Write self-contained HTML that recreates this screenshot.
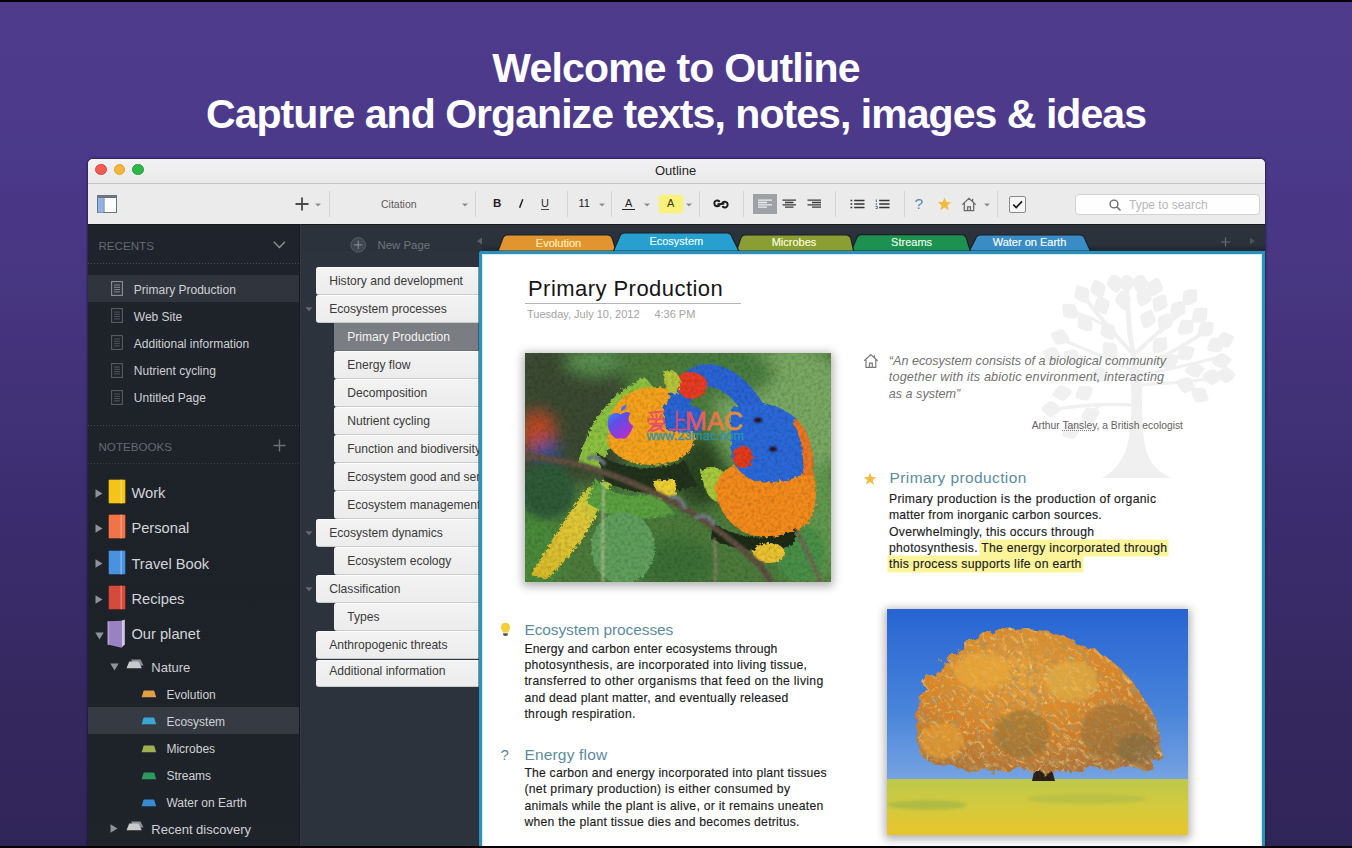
<!DOCTYPE html>
<html><head><meta charset="utf-8">
<style>
*{margin:0;padding:0;box-sizing:border-box}
html,body{width:1352px;height:848px;overflow:hidden}
body{position:relative;font-family:"Liberation Sans",sans-serif;background:linear-gradient(180deg,#4f3b8b 0%,#4d3a8b 10%,#4b398a 17.7%,#46357f 35.4%,#3c2d70 59%,#35285f 82.5%,#302558 100%)}
.a{position:absolute}
.t{position:absolute;white-space:nowrap;line-height:1}
#hd1,#hd2{color:#fff;font-weight:bold;left:0;width:1352px;text-align:center}
.blk{position:absolute;left:0;width:1352px;background:#050308}
</style></head><body>
<div class="blk" style="top:0;height:2px"></div>

<div id="hd1" class="t" style="top:48px;font-size:41px;letter-spacing:-0.8px">Welcome to Outline</div>
<div id="hd2" class="t" style="top:94px;font-size:41px;letter-spacing:-0.95px">Capture and Organize texts, notes, images &amp; ideas</div>

<!-- window -->
<div class="a" style="left:88px;top:159px;width:1177px;height:687px;border-radius:5px 5px 0 0;overflow:hidden;background:#ececec;box-shadow:0 0 2px 1px rgba(10,5,30,0.45)"></div>
<div class="a" style="left:88px;top:159px;width:1177px;height:24px;border-radius:5px 5px 0 0;background:linear-gradient(#f2f1f3,#eaeaea)"></div>
<div class="a" style="left:88px;top:183px;width:1177px;height:1px;background:#c4c4c4"></div>
<div class="a" style="left:88px;top:184px;width:1177px;height:40px;background:#ebebeb"></div>
<div class="a" style="left:95px;top:163.5px;width:11.5px;height:11.5px;border-radius:50%;background:#f25c54;border:0.5px solid #dd4a44"></div>
<div class="a" style="left:113.5px;top:163.5px;width:11.5px;height:11.5px;border-radius:50%;background:#f6b63a;border:0.5px solid #dfa030"></div>
<div class="a" style="left:132px;top:163.5px;width:11.5px;height:11.5px;border-radius:50%;background:#2fb84a;border:0.5px solid #22a03a"></div>
<div id="ttl" class="t" style="left:655px;top:164px;font-size:13px;color:#262626">Outline</div>
<div class="a" style="left:88px;top:223.5px;width:1177px;height:1px;background:#b8b8b8"></div>
<!-- toolbar -->
<svg class="a" style="left:97px;top:195px" width="20" height="18"><rect x="0.5" y="0.5" width="19" height="17" fill="#fdfdfd" stroke="#6c7480"/><rect x="0.5" y="0.5" width="19" height="2.5" fill="#6c7480"/><rect x="1" y="3" width="5.5" height="14.5" fill="#8fb2ea"/><rect x="6.5" y="3" width="1" height="14.5" fill="#6c7480"/></svg>
<svg class="a" style="left:295px;top:197px" width="14" height="14"><path d="M7 0.5V13.5M0.5 7H13.5" stroke="#4a4a4a" stroke-width="1.8"/></svg>
<div class="a" style="left:329px;top:191px;width:1px;height:26px;background:#d2d2d2"></div><div class="a" style="left:475px;top:191px;width:1px;height:26px;background:#d2d2d2"></div><div class="a" style="left:567px;top:191px;width:1px;height:26px;background:#d2d2d2"></div><div class="a" style="left:611px;top:191px;width:1px;height:26px;background:#d2d2d2"></div><div class="a" style="left:699px;top:191px;width:1px;height:26px;background:#d2d2d2"></div><div class="a" style="left:743px;top:191px;width:1px;height:26px;background:#d2d2d2"></div><div class="a" style="left:835px;top:191px;width:1px;height:26px;background:#d2d2d2"></div><div class="a" style="left:904px;top:191px;width:1px;height:26px;background:#d2d2d2"></div><div class="a" style="left:997px;top:191px;width:1px;height:26px;background:#d2d2d2"></div><svg class="a" style="left:315px;top:203px" width="6" height="4"><path d="M0 0.5H6L3 3.5Z" fill="#8c8c8c"/></svg><svg class="a" style="left:461.5px;top:203px" width="6" height="4"><path d="M0 0.5H6L3 3.5Z" fill="#8c8c8c"/></svg><svg class="a" style="left:599px;top:203px" width="6" height="4"><path d="M0 0.5H6L3 3.5Z" fill="#8c8c8c"/></svg><svg class="a" style="left:644px;top:203px" width="6" height="4"><path d="M0 0.5H6L3 3.5Z" fill="#8c8c8c"/></svg><svg class="a" style="left:686px;top:203px" width="6" height="4"><path d="M0 0.5H6L3 3.5Z" fill="#8c8c8c"/></svg><svg class="a" style="left:984px;top:203px" width="6" height="4"><path d="M0 0.5H6L3 3.5Z" fill="#8c8c8c"/></svg>
<div id="cit" class="t" style="left:381px;top:198.5px;font-size:10.5px;color:#5c5c5c">Citation</div>
<div class="t" style="left:493px;top:198px;font-size:11.5px;font-weight:bold;color:#1e1e1e">B</div>
<svg class="a" style="left:518px;top:199px" width="6" height="9"><path d="M4.8 0.3L1.6 8.7" stroke="#222" stroke-width="1.5"/></svg>
<div class="t" style="left:541px;top:198px;font-size:11px;color:#2a2a2a">U</div>
<div class="a" style="left:541px;top:209px;width:8px;height:1px;background:#444"></div>
<div id="n11" class="t" style="left:578.5px;top:198px;font-size:11px;color:#222">11</div>
<div class="t" style="left:625px;top:198px;font-size:11px;color:#222">A</div>
<div class="a" style="left:622px;top:208.7px;width:13px;height:1.8px;background:#222"></div>
<div class="a" style="left:659px;top:195px;width:23.5px;height:17.5px;border-radius:4px;background:#f8f27a;box-shadow:0 0 2px #f8f27a"></div>
<div class="t" style="left:667px;top:198px;font-size:11px;color:#3a3a14">A</div>
<svg class="a" style="left:713px;top:199px" width="16" height="10"><path d="M6.2 2.2C4.6 0.8 1.4 1.4 1.3 4.2C1.2 7.3 4.6 8 6.4 6.4M9.6 3.5C11.4 1.9 14.7 2.6 14.7 5.6C14.7 8.6 11.4 9.2 9.8 7.8M5.3 5.3L10.5 4.7" stroke="#1c1c1c" stroke-width="2" fill="none" stroke-linecap="round"/></svg>
<div class="a" style="left:753px;top:194px;width:24px;height:20px;background:#9ea2a7"></div>
<svg class="a" style="left:758px;top:199px" width="15" height="11"><path d="M0 1.2H14M0 3.5H9M0 5.8H14M0 8.1H9" stroke="#eef0f2" stroke-width="1.3"/></svg>
<svg class="a" style="left:782px;top:199px" width="15" height="11"><path d="M0.5 1.2H14M3 3.5H11.5M0.5 5.8H14M3 8.1H11.5" stroke="#3a3a3a" stroke-width="1.3"/></svg>
<svg class="a" style="left:807px;top:199px" width="15" height="11"><path d="M0.5 1.2H14M5 3.5H14M0.5 5.8H14M5 8.1H14" stroke="#3a3a3a" stroke-width="1.3"/></svg>
<svg class="a" style="left:850px;top:199px" width="16" height="10"><path d="M0.5 1.5H2.3M0.5 5H2.3M0.5 8.5H2.3" stroke="#333" stroke-width="1.6"/><path d="M4.2 1.5H14.5M4.2 5H14.5M4.2 8.5H14.5" stroke="#333" stroke-width="1.3"/></svg>
<svg class="a" style="left:875px;top:199px" width="16" height="10"><path d="M1.3 0.5V3M1.3 4V6.2M0.6 7.4H2.3V9.5H0.6" stroke="#4a6fa0" stroke-width="1" fill="none"/><path d="M4.2 1.5H14.5M4.2 5H14.5M4.2 8.5H14.5" stroke="#333" stroke-width="1.4"/></svg>
<div class="t" style="left:914.5px;top:196px;font-size:15.5px;color:#5a88b8">?</div>
<svg class="a" style="left:937px;top:197px" width="15" height="14"><path d="M7.5 0.6L9.3 5.1L14.2 5.3L10.4 8.4L11.7 13.2L7.5 10.5L3.3 13.2L4.6 8.4L0.8 5.3L5.7 5.1Z" fill="#f1bb3c"/></svg>
<svg class="a" style="left:961px;top:197px" width="16" height="15"><path d="M1.3 7.6L8 1.3L14.7 7.6M3.3 6V13.6H12.7V6M6.6 13.6V9.8H9.4V13.6M11.6 1.8V4.2" stroke="#6a6a6a" stroke-width="1.3" fill="none"/></svg>
<div class="a" style="left:1009px;top:196px;width:17px;height:16.5px;border:1px solid #8a8a8a;border-radius:2px;background:#f6f6f6"></div>
<svg class="a" style="left:1011px;top:199px" width="13" height="11"><path d="M2.3 5.6L5.2 8.5L11 2.4" stroke="#1a1a1a" stroke-width="1.7" fill="none"/></svg>
<div class="a" style="left:1075px;top:194px;width:185px;height:20.5px;border:1px solid #d2d2d2;border-radius:4px;background:#fefefe"></div>
<svg class="a" style="left:1109px;top:198.5px" width="13" height="13"><circle cx="5" cy="5" r="3.9" stroke="#6a6a6a" stroke-width="1.4" fill="none"/><path d="M7.8 7.8L11.5 11.5" stroke="#6a6a6a" stroke-width="1.6"/></svg>
<div id="srch" class="t" style="left:1129px;top:199px;font-size:12px;color:#b8b8b8">Type to search</div>

<!-- sidebar -->
<div class="a" style="left:88px;top:224px;width:211px;height:622px;background:linear-gradient(180deg,#1f232b,#1d2128 60%,#1f232a)"></div>
<div class="a" style="left:299px;top:224px;width:1px;height:622px;background:#16191e"></div>
<div class="a" style="left:88px;top:263px;width:211px;height:1px;background:repeating-linear-gradient(90deg,#4a4f57 0 1px,transparent 1px 3px)"></div>
<div class="a" style="left:88px;top:425px;width:211px;height:1px;background:repeating-linear-gradient(90deg,#4a4f57 0 1px,transparent 1px 3px)"></div>
<div class="a" style="left:88px;top:463px;width:211px;height:1px;background:repeating-linear-gradient(90deg,#3a3f47 0 1px,transparent 1px 3px)"></div>
<div class="a" style="left:88px;top:275px;width:211px;height:27px;background:#30353d"></div>
<div class="a" style="left:88px;top:707px;width:211px;height:27px;background:#363b43"></div>
<svg class="a" style="left:273px;top:241px" width="13" height="8"><path d="M0.8 0.8L6.4 6.5L12 0.8" stroke="#8c9198" stroke-width="1.4" fill="none"/></svg>
<svg class="a" style="left:273px;top:438.5px" width="13" height="13"><path d="M6.5 0.5V12.5M0.5 6.5H12.5" stroke="#6c7178" stroke-width="1.3"/></svg>
<div id="rec" class="t" style="left:98.5px;top:239.98px;font-size:11.6px;color:#646a73;">RECENTS</div>
<div id="nbk" class="t" style="left:98.5px;top:440.68px;font-size:11.6px;color:#646a73;">NOTEBOOKS</div>
<svg class="a" style="left:110.5px;top:281.3px" width="12" height="15"><rect x="0.6" y="0.6" width="10.8" height="13.8" fill="none" stroke="#8e9298" stroke-width="1.1"/><path d="M3 4H9M3 6.3H9M3 8.6H9M3 10.9H9" stroke="#8e9298" stroke-width="0.9"/></svg>
<div id="ri0" class="t" style="left:133.8px;top:283.64px;font-size:12px;color:#cfd1d4;">Primary Production</div>
<svg class="a" style="left:110.5px;top:308.4px" width="12" height="15"><rect x="0.6" y="0.6" width="10.8" height="13.8" fill="none" stroke="#5a5e65" stroke-width="1.1"/><path d="M3 4H9M3 6.3H9M3 8.6H9M3 10.9H9" stroke="#575b62" stroke-width="0.9"/></svg>
<div id="ri1" class="t" style="left:133.8px;top:310.69px;font-size:12px;color:#cfd1d4;">Web Site</div>
<svg class="a" style="left:110.5px;top:335.4px" width="12" height="15"><rect x="0.6" y="0.6" width="10.8" height="13.8" fill="none" stroke="#575b62" stroke-width="1.1"/><path d="M3 4H9M3 6.3H9M3 8.6H9M3 10.9H9" stroke="#575b62" stroke-width="0.9"/></svg>
<div id="ri2" class="t" style="left:133.8px;top:337.74px;font-size:12px;color:#cfd1d4;">Additional information</div>
<svg class="a" style="left:110.5px;top:362.5px" width="12" height="15"><rect x="0.6" y="0.6" width="10.8" height="13.8" fill="none" stroke="#575b62" stroke-width="1.1"/><path d="M3 4H9M3 6.3H9M3 8.6H9M3 10.9H9" stroke="#575b62" stroke-width="0.9"/></svg>
<div id="ri3" class="t" style="left:133.8px;top:364.79px;font-size:12px;color:#cfd1d4;">Nutrient cycling</div>
<svg class="a" style="left:110.5px;top:389.5px" width="12" height="15"><rect x="0.6" y="0.6" width="10.8" height="13.8" fill="none" stroke="#575b62" stroke-width="1.1"/><path d="M3 4H9M3 6.3H9M3 8.6H9M3 10.9H9" stroke="#575b62" stroke-width="0.9"/></svg>
<div id="ri4" class="t" style="left:133.8px;top:391.84px;font-size:12px;color:#cfd1d4;">Untitled Page</div>
<svg class="a" style="left:95px;top:488.5px" width="8" height="9"><path d="M0.5 0.3L7.5 4.5L0.5 8.7Z" fill="#8f9399"/></svg>
<svg class="a" style="left:107.5px;top:478.8px" width="18" height="25"><rect x="0.5" y="0.5" width="17" height="24" rx="1" fill="#f4c41c"/><rect x="12.5" y="0.5" width="1.3" height="24" fill="#f9dc5c"/><rect x="0.5" y="0.5" width="17" height="24" rx="1" fill="none" stroke="rgba(0,0,0,0.25)" stroke-width="1"/></svg>
<div id="nb0" class="t" style="left:131.4px;top:485.86px;font-size:14.7px;color:#d3d5d8;">Work</div>
<svg class="a" style="left:95px;top:523.9px" width="8" height="9"><path d="M0.5 0.3L7.5 4.5L0.5 8.7Z" fill="#8f9399"/></svg>
<svg class="a" style="left:107.5px;top:514.2px" width="18" height="25"><rect x="0.5" y="0.5" width="17" height="24" rx="1" fill="#f07448"/><rect x="12.5" y="0.5" width="1.3" height="24" fill="#f6a080"/><rect x="0.5" y="0.5" width="17" height="24" rx="1" fill="none" stroke="rgba(0,0,0,0.25)" stroke-width="1"/></svg>
<div id="nb1" class="t" style="left:131.4px;top:521.26px;font-size:14.7px;color:#d3d5d8;">Personal</div>
<svg class="a" style="left:95px;top:559.3px" width="8" height="9"><path d="M0.5 0.3L7.5 4.5L0.5 8.7Z" fill="#8f9399"/></svg>
<svg class="a" style="left:107.5px;top:549.6px" width="18" height="25"><rect x="0.5" y="0.5" width="17" height="24" rx="1" fill="#4a92e0"/><rect x="12.5" y="0.5" width="1.3" height="24" fill="#8ab8ee"/><rect x="0.5" y="0.5" width="17" height="24" rx="1" fill="none" stroke="rgba(0,0,0,0.25)" stroke-width="1"/></svg>
<div id="nb2" class="t" style="left:131.4px;top:556.66px;font-size:14.7px;color:#d3d5d8;">Travel Book</div>
<svg class="a" style="left:95px;top:594.7px" width="8" height="9"><path d="M0.5 0.3L7.5 4.5L0.5 8.7Z" fill="#8f9399"/></svg>
<svg class="a" style="left:107.5px;top:585.0px" width="18" height="25"><rect x="0.5" y="0.5" width="17" height="24" rx="1" fill="#d44a3c"/><rect x="12.5" y="0.5" width="1.3" height="24" fill="#e88478"/><rect x="0.5" y="0.5" width="17" height="24" rx="1" fill="none" stroke="rgba(0,0,0,0.25)" stroke-width="1"/></svg>
<div id="nb3" class="t" style="left:131.4px;top:592.06px;font-size:14.7px;color:#d3d5d8;">Recipes</div>
<svg class="a" style="left:94.5px;top:631.8px" width="9" height="8"><path d="M0.3 0.5H8.7L4.5 7.5Z" fill="#8f9399"/></svg>
<svg class="a" style="left:106px;top:619.3px" width="22" height="30"><path d="M1.7 2.2L15.5 1.8V28.7L1.7 25.5Z" fill="#9a82c2"/><path d="M1.7 2.2H3.2V25.8H1.7Z" fill="#b4a0d8"/><path d="M15.5 1.8L18.8 0.6V25.2L15.5 28.7Z" fill="#d2c6ea"/></svg>
<div id="nb4" class="t" style="left:131.4px;top:627.36px;font-size:14.7px;color:#d3d5d8;">Our planet</div>
<svg class="a" style="left:109.5px;top:663.0px" width="9" height="8"><path d="M0.3 0.5H8.7L4.5 7.5Z" fill="#8f9399"/></svg>
<svg class="a" style="left:126px;top:659.0px" width="18" height="10"><path d="M5 0.5H14.5L17.5 6.5H8Z" fill="#8a8e94"/><path d="M3.2 2.6H12.6L15.8 9.2H0.5Z" fill="#c8cacc"/></svg>
<div id="nat" class="t" style="left:151.3px;top:660.80px;font-size:13px;color:#cfd1d4;">Nature</div>
<svg class="a" style="left:141px;top:689.4px" width="16" height="9"><path d="M3.4 1.5H12.4Q13 1.5 13.3 2.2L15.2 8.2H0.6L2.5 2.2Q2.8 1.5 3.4 1.5Z" fill="#e0a048"/></svg>
<div id="kd0" class="t" style="left:166.4px;top:688.54px;font-size:12px;color:#cfd1d4;">Evolution</div>
<svg class="a" style="left:141px;top:716.4px" width="16" height="9"><path d="M3.4 1.5H12.4Q13 1.5 13.3 2.2L15.2 8.2H0.6L2.5 2.2Q2.8 1.5 3.4 1.5Z" fill="#3aa6d6"/></svg>
<div id="kd1" class="t" style="left:166.4px;top:715.59px;font-size:12px;color:#cfd1d4;">Ecosystem</div>
<svg class="a" style="left:141px;top:743.5px" width="16" height="9"><path d="M3.4 1.5H12.4Q13 1.5 13.3 2.2L15.2 8.2H0.6L2.5 2.2Q2.8 1.5 3.4 1.5Z" fill="#9fae50"/></svg>
<div id="kd2" class="t" style="left:166.4px;top:742.64px;font-size:12px;color:#cfd1d4;">Microbes</div>
<svg class="a" style="left:141px;top:770.5px" width="16" height="9"><path d="M3.4 1.5H12.4Q13 1.5 13.3 2.2L15.2 8.2H0.6L2.5 2.2Q2.8 1.5 3.4 1.5Z" fill="#2e9a62"/></svg>
<div id="kd3" class="t" style="left:166.4px;top:769.69px;font-size:12px;color:#cfd1d4;">Streams</div>
<svg class="a" style="left:141px;top:797.6px" width="16" height="9"><path d="M3.4 1.5H12.4Q13 1.5 13.3 2.2L15.2 8.2H0.6L2.5 2.2Q2.8 1.5 3.4 1.5Z" fill="#3a8cd0"/></svg>
<div id="kd4" class="t" style="left:166.4px;top:796.74px;font-size:12px;color:#cfd1d4;">Water on Earth</div>
<svg class="a" style="left:110px;top:824.4px" width="8" height="9"><path d="M0.5 0.3L7.5 4.5L0.5 8.7Z" fill="#8f9399"/></svg>
<svg class="a" style="left:126px;top:821.4px" width="18" height="10"><path d="M5 0.5H14.5L17.5 6.5H8Z" fill="#8a8e94"/><path d="M3.2 2.6H12.6L15.8 9.2H0.5Z" fill="#c8cacc"/></svg>
<div id="rdc" class="t" style="left:151.3px;top:823.20px;font-size:13px;color:#cfd1d4;">Recent discovery</div>

<!-- pages column -->
<div class="a" style="left:300px;top:224px;width:965px;height:27px;background:#2c323b"></div>
<div class="a" style="left:88px;top:224px;width:1177px;height:1px;background:#15181d"></div>
<div class="a" style="left:300px;top:224px;width:1px;height:622px;background:#353b44"></div>
<div class="a" style="left:301px;top:251px;width:180px;height:595px;background:#2d333d"></div>
<svg class="a" style="left:350px;top:237px" width="17" height="17"><circle cx="8.2" cy="7.9" r="7.3" fill="#3f454e" stroke="#585e67" stroke-width="1"/><path d="M8.2 3.6V12.2M3.9 7.9H12.5" stroke="#8d939b" stroke-width="1"/></svg>
<div id="np" class="t" style="left:377.5px;top:240.35px;font-size:11.4px;color:#6e757d;">New Page</div>
<div class="a" style="left:316px;top:267px;width:165px;height:28px;background:linear-gradient(#f3f3f3,#ececec);border-radius:3px 0 0 3px;border-bottom:1px solid #c9cacc;overflow:hidden;box-shadow:inset 0 1px 0 rgba(255,255,255,0.8)"></div>
<div class="a" style="left:316px;top:267px;width:163px;height:28px;overflow:hidden"><div id="pc0" class="t" style="left:13.2px;top:7.56px;font-size:12.1px;color:#3a3a3a;">History and development</div>
</div>
<div class="a" style="left:316px;top:295px;width:165px;height:28px;background:linear-gradient(#f3f3f3,#ececec);border-radius:3px 0 0 3px;border-bottom:1px solid #c9cacc;overflow:hidden;box-shadow:inset 0 1px 0 rgba(255,255,255,0.8)"></div>
<div class="a" style="left:316px;top:295px;width:163px;height:28px;overflow:hidden"><div id="pc1" class="t" style="left:13.2px;top:7.56px;font-size:12.1px;color:#3a3a3a;">Ecosystem processes</div>
</div>
<svg class="a" style="left:304.5px;top:307px" width="8" height="5"><path d="M0.3 0.3H7.7L4 4.5Z" fill="#5f656e"/></svg>
<div class="a" style="left:334px;top:323px;width:147px;height:28px;background:#7a7d82;border-radius:0;border-bottom:1px solid #6a6d72;overflow:hidden;box-shadow:inset 0 1px 0 rgba(255,255,255,0)"></div>
<div class="a" style="left:334px;top:323px;width:145px;height:28px;overflow:hidden"><div id="pc2" class="t" style="left:13.2px;top:7.56px;font-size:12.1px;color:#f2f2f2;">Primary Production</div>
</div>
<div class="a" style="left:334px;top:351px;width:147px;height:28px;background:linear-gradient(#f3f3f3,#ececec);border-radius:3px 0 0 3px;border-bottom:1px solid #c9cacc;overflow:hidden;box-shadow:inset 0 1px 0 rgba(255,255,255,0.8)"></div>
<div class="a" style="left:334px;top:351px;width:145px;height:28px;overflow:hidden"><div id="pc3" class="t" style="left:13.2px;top:7.56px;font-size:12.1px;color:#3a3a3a;">Energy flow</div>
</div>
<div class="a" style="left:334px;top:379px;width:147px;height:28px;background:linear-gradient(#f3f3f3,#ececec);border-radius:3px 0 0 3px;border-bottom:1px solid #c9cacc;overflow:hidden;box-shadow:inset 0 1px 0 rgba(255,255,255,0.8)"></div>
<div class="a" style="left:334px;top:379px;width:145px;height:28px;overflow:hidden"><div id="pc4" class="t" style="left:13.2px;top:7.56px;font-size:12.1px;color:#3a3a3a;">Decomposition</div>
</div>
<div class="a" style="left:334px;top:407px;width:147px;height:28px;background:linear-gradient(#f3f3f3,#ececec);border-radius:3px 0 0 3px;border-bottom:1px solid #c9cacc;overflow:hidden;box-shadow:inset 0 1px 0 rgba(255,255,255,0.8)"></div>
<div class="a" style="left:334px;top:407px;width:145px;height:28px;overflow:hidden"><div id="pc5" class="t" style="left:13.2px;top:7.56px;font-size:12.1px;color:#3a3a3a;">Nutrient cycling</div>
</div>
<div class="a" style="left:334px;top:435px;width:147px;height:28px;background:linear-gradient(#f3f3f3,#ececec);border-radius:3px 0 0 3px;border-bottom:1px solid #c9cacc;overflow:hidden;box-shadow:inset 0 1px 0 rgba(255,255,255,0.8)"></div>
<div class="a" style="left:334px;top:435px;width:145px;height:28px;overflow:hidden"><div id="pc6" class="t" style="left:13.2px;top:7.56px;font-size:12.1px;color:#3a3a3a;">Function and biodiversity</div>
</div>
<div class="a" style="left:334px;top:463px;width:147px;height:28px;background:linear-gradient(#f3f3f3,#ececec);border-radius:3px 0 0 3px;border-bottom:1px solid #c9cacc;overflow:hidden;box-shadow:inset 0 1px 0 rgba(255,255,255,0.8)"></div>
<div class="a" style="left:334px;top:463px;width:145px;height:28px;overflow:hidden"><div id="pc7" class="t" style="left:13.2px;top:7.56px;font-size:12.1px;color:#3a3a3a;">Ecosystem good and services</div>
</div>
<div class="a" style="left:334px;top:491px;width:147px;height:28px;background:linear-gradient(#f3f3f3,#ececec);border-radius:3px 0 0 3px;border-bottom:1px solid #c9cacc;overflow:hidden;box-shadow:inset 0 1px 0 rgba(255,255,255,0.8)"></div>
<div class="a" style="left:334px;top:491px;width:145px;height:28px;overflow:hidden"><div id="pc8" class="t" style="left:13.2px;top:7.56px;font-size:12.1px;color:#3a3a3a;">Ecosystem management</div>
</div>
<div class="a" style="left:316px;top:519px;width:165px;height:28px;background:linear-gradient(#f3f3f3,#ececec);border-radius:3px 0 0 3px;border-bottom:1px solid #c9cacc;overflow:hidden;box-shadow:inset 0 1px 0 rgba(255,255,255,0.8)"></div>
<div class="a" style="left:316px;top:519px;width:163px;height:28px;overflow:hidden"><div id="pc9" class="t" style="left:13.2px;top:7.56px;font-size:12.1px;color:#3a3a3a;">Ecosystem dynamics</div>
</div>
<svg class="a" style="left:304.5px;top:531px" width="8" height="5"><path d="M0.3 0.3H7.7L4 4.5Z" fill="#5f656e"/></svg>
<div class="a" style="left:334px;top:547px;width:147px;height:28px;background:linear-gradient(#f3f3f3,#ececec);border-radius:3px 0 0 3px;border-bottom:1px solid #c9cacc;overflow:hidden;box-shadow:inset 0 1px 0 rgba(255,255,255,0.8)"></div>
<div class="a" style="left:334px;top:547px;width:145px;height:28px;overflow:hidden"><div id="pc10" class="t" style="left:13.2px;top:7.56px;font-size:12.1px;color:#3a3a3a;">Ecosystem ecology</div>
</div>
<div class="a" style="left:316px;top:575px;width:165px;height:28px;background:linear-gradient(#f3f3f3,#ececec);border-radius:3px 0 0 3px;border-bottom:1px solid #c9cacc;overflow:hidden;box-shadow:inset 0 1px 0 rgba(255,255,255,0.8)"></div>
<div class="a" style="left:316px;top:575px;width:163px;height:28px;overflow:hidden"><div id="pc11" class="t" style="left:13.2px;top:7.56px;font-size:12.1px;color:#3a3a3a;">Classification</div>
</div>
<svg class="a" style="left:304.5px;top:587px" width="8" height="5"><path d="M0.3 0.3H7.7L4 4.5Z" fill="#5f656e"/></svg>
<div class="a" style="left:334px;top:603px;width:147px;height:28px;background:linear-gradient(#f3f3f3,#ececec);border-radius:3px 0 0 3px;border-bottom:1px solid #c9cacc;overflow:hidden;box-shadow:inset 0 1px 0 rgba(255,255,255,0.8)"></div>
<div class="a" style="left:334px;top:603px;width:145px;height:28px;overflow:hidden"><div id="pc12" class="t" style="left:13.2px;top:7.56px;font-size:12.1px;color:#3a3a3a;">Types</div>
</div>
<div class="a" style="left:316px;top:631px;width:165px;height:28px;background:linear-gradient(#f3f3f3,#ececec);border-radius:3px 0 0 3px;border-bottom:1px solid #c9cacc;overflow:hidden;box-shadow:inset 0 1px 0 rgba(255,255,255,0.8)"></div>
<div class="a" style="left:316px;top:631px;width:163px;height:28px;overflow:hidden"><div id="pc13" class="t" style="left:13.2px;top:7.56px;font-size:12.1px;color:#3a3a3a;">Anthropogenic threats</div>
</div>
<div class="a" style="left:316px;top:660px;width:165px;height:27px;background:linear-gradient(#f3f3f3,#ececec);border-radius:3px 0 0 3px;border-bottom:1px solid #c9cacc;overflow:hidden;box-shadow:inset 0 1px 0 rgba(255,255,255,0.8)"></div>
<div class="a" style="left:316px;top:660px;width:163px;height:27px;overflow:hidden"><div id="pc14" class="t" style="left:13.2px;top:4.76px;font-size:12.1px;color:#3a3a3a;">Additional information</div>
</div>

<div class="a" style="left:482px;top:244px;width:783px;height:7px;background:linear-gradient(rgba(20,28,34,0),rgba(20,28,34,0.6))"></div>
<svg class="a" style="left:0;top:0" width="1352" height="260"><path d="M968.5 252.5 L975.5 239 Q976.7 235 980.5 235 L1080 235 Q1083.8 235 1085 239 L1091 252.5 Z" fill="#3a8cc5" stroke="#1c2026" stroke-width="1.2"/><path d="M850.6 252.5 L856.5 238.6 Q857.7 234.6 861.5 234.6 L961.5 234.6 Q965.3 234.6 966.5 238.6 L970.8 252.5 Z" fill="#1d9150" stroke="#1c2026" stroke-width="1.2"/><path d="M736 252.5 L740.5 239 Q741.7 235 745.5 235 L846 235 Q849.8 235 851 239 L854 252.5 Z" fill="#8a9e33" stroke="#1c2026" stroke-width="1.2"/><path d="M497.4 252.5 L502.5 239 Q503.7 235 507.5 235 L607.5 235 Q611.3 235 612.5 239 L616.5 252.5 Z" fill="#e0952f" stroke="#1c2026" stroke-width="1.2"/><path d="M612.8 252.5 L619.5 237 Q620.7 233 624.5 233 L727 233 Q730.8 233 732 237 L739.6 252.5 Z" fill="#27a0cf" stroke="#1c2026" stroke-width="1.2"/><path d="M477 241L482 237.5V244.5Z" fill="#5a606a"/><path d="M1250 237.5L1255 241L1250 244.5Z" fill="#4c525a"/><path d="M1225.5 237.5V246.5M1221 242H1230" stroke="#656b73" stroke-width="1.2"/></svg>
<div id="tb0" class="t" style="left:498.5px;width:120px;text-align:center;top:237.5px;font-size:11px;color:#fde4a8;text-shadow:0 0 0.4px #fde4a8">Evolution</div>
<div id="tb1" class="t" style="left:616.3px;width:120px;text-align:center;top:235.7px;font-size:11px;color:#d6f1fc;text-shadow:0 0 0.4px #d6f1fc">Ecosystem</div>
<div id="tb2" class="t" style="left:734px;width:120px;text-align:center;top:237.3px;font-size:11px;color:#eef2c4;text-shadow:0 0 0.4px #eef2c4">Microbes</div>
<div id="tb3" class="t" style="left:851.6px;width:120px;text-align:center;top:237.2px;font-size:11px;color:#d4f0dc;text-shadow:0 0 0.4px #d4f0dc">Streams</div>
<div id="tb4" class="t" style="left:969.5px;width:120px;text-align:center;top:237.2px;font-size:11px;color:#e2f0fb;text-shadow:0 0 0.4px #e2f0fb">Water on Earth</div>
<!-- content panel -->
<div class="a" style="left:479px;top:251px;width:786px;height:595px;background:#fff;border:3px solid #2e90b8;border-bottom:none;border-radius:3px 3px 0 0;box-shadow:inset 1px 1px 0 #c8f0fa,inset -1px 0 0 #c8f0fa,0 0 0 0.5px #1c3a48"></div>
<!-- tree watermark -->
<svg class="a" style="left:1040px;top:275px" width="200" height="206">
<g fill="#f0f0f0">
<path d="M90 95 Q94 150 86 175 Q78 195 62 203 L132 203 Q112 195 106 175 Q100 150 103 95 Z"/>
</g>
<g stroke="#f0f0f0" fill="none" stroke-linecap="round">
<path d="M96 110 Q94 80 90 60 Q88 35 86 12" stroke-width="5"/>
<path d="M94 80 Q70 55 44 22" stroke-width="4"/>
<path d="M96 78 Q120 55 143 36" stroke-width="4"/>
<path d="M100 92 Q140 75 168 54" stroke-width="3.5"/>
<path d="M101 100 Q150 90 183 81" stroke-width="3"/>
<path d="M102 110 Q140 108 178 103" stroke-width="3"/>
<path d="M92 95 Q60 80 20 64" stroke-width="3.5"/>
<path d="M90 130 Q50 128 12 135" stroke-width="3.5"/>
<path d="M70 55 Q55 42 30 36" stroke-width="2.5"/>
<path d="M60 130 Q45 145 31 156" stroke-width="2.5"/>
<path d="M120 58 Q130 50 125 47" stroke-width="2"/>
</g>
<g fill="#f0f0f0"><path d="M0 -10 Q4 -7 6 -4 Q10 -1 6 4 Q3 9 0 10 Q-3 9 -6 4 Q-10 -1 -6 -4 Q-4 -7 0 -10Z" transform="translate(86.6 8) rotate(0)"/><path d="M0 -10 Q4 -7 6 -4 Q10 -1 6 4 Q3 9 0 10 Q-3 9 -6 4 Q-10 -1 -6 -4 Q-4 -7 0 -10Z" transform="translate(42 19) rotate(-30)"/><path d="M0 -10 Q4 -7 6 -4 Q10 -1 6 4 Q3 9 0 10 Q-3 9 -6 4 Q-10 -1 -6 -4 Q-4 -7 0 -10Z" transform="translate(62 30) rotate(-20)"/><path d="M0 -10 Q4 -7 6 -4 Q10 -1 6 4 Q3 9 0 10 Q-3 9 -6 4 Q-10 -1 -6 -4 Q-4 -7 0 -10Z" transform="translate(30 36) rotate(-50)"/><path d="M0 -10 Q4 -7 6 -4 Q10 -1 6 4 Q3 9 0 10 Q-3 9 -6 4 Q-10 -1 -6 -4 Q-4 -7 0 -10Z" transform="translate(45 48) rotate(-40)"/><path d="M0 -10 Q4 -7 6 -4 Q10 -1 6 4 Q3 9 0 10 Q-3 9 -6 4 Q-10 -1 -6 -4 Q-4 -7 0 -10Z" transform="translate(20 62) rotate(-70)"/><path d="M0 -10 Q4 -7 6 -4 Q10 -1 6 4 Q3 9 0 10 Q-3 9 -6 4 Q-10 -1 -6 -4 Q-4 -7 0 -10Z" transform="translate(32 82) rotate(-60)"/><path d="M0 -10 Q4 -7 6 -4 Q10 -1 6 4 Q3 9 0 10 Q-3 9 -6 4 Q-10 -1 -6 -4 Q-4 -7 0 -10Z" transform="translate(104 22) rotate(20)"/><path d="M0 -10 Q4 -7 6 -4 Q10 -1 6 4 Q3 9 0 10 Q-3 9 -6 4 Q-10 -1 -6 -4 Q-4 -7 0 -10Z" transform="translate(120 28) rotate(30)"/><path d="M0 -10 Q4 -7 6 -4 Q10 -1 6 4 Q3 9 0 10 Q-3 9 -6 4 Q-10 -1 -6 -4 Q-4 -7 0 -10Z" transform="translate(138 34) rotate(40)"/><path d="M0 -10 Q4 -7 6 -4 Q10 -1 6 4 Q3 9 0 10 Q-3 9 -6 4 Q-10 -1 -6 -4 Q-4 -7 0 -10Z" transform="translate(125 47) rotate(30)"/><path d="M0 -10 Q4 -7 6 -4 Q10 -1 6 4 Q3 9 0 10 Q-3 9 -6 4 Q-10 -1 -6 -4 Q-4 -7 0 -10Z" transform="translate(146 52) rotate(50)"/><path d="M0 -10 Q4 -7 6 -4 Q10 -1 6 4 Q3 9 0 10 Q-3 9 -6 4 Q-10 -1 -6 -4 Q-4 -7 0 -10Z" transform="translate(166 54) rotate(50)"/><path d="M0 -10 Q4 -7 6 -4 Q10 -1 6 4 Q3 9 0 10 Q-3 9 -6 4 Q-10 -1 -6 -4 Q-4 -7 0 -10Z" transform="translate(176 70) rotate(60)"/><path d="M0 -10 Q4 -7 6 -4 Q10 -1 6 4 Q3 9 0 10 Q-3 9 -6 4 Q-10 -1 -6 -4 Q-4 -7 0 -10Z" transform="translate(182 86) rotate(80)"/><path d="M0 -10 Q4 -7 6 -4 Q10 -1 6 4 Q3 9 0 10 Q-3 9 -6 4 Q-10 -1 -6 -4 Q-4 -7 0 -10Z" transform="translate(172 102) rotate(100)"/><path d="M0 -10 Q4 -7 6 -4 Q10 -1 6 4 Q3 9 0 10 Q-3 9 -6 4 Q-10 -1 -6 -4 Q-4 -7 0 -10Z" transform="translate(146 110) rotate(110)"/><path d="M0 -10 Q4 -7 6 -4 Q10 -1 6 4 Q3 9 0 10 Q-3 9 -6 4 Q-10 -1 -6 -4 Q-4 -7 0 -10Z" transform="translate(130 86) rotate(60)"/><path d="M0 -10 Q4 -7 6 -4 Q10 -1 6 4 Q3 9 0 10 Q-3 9 -6 4 Q-10 -1 -6 -4 Q-4 -7 0 -10Z" transform="translate(146 78) rotate(60)"/><path d="M0 -10 Q4 -7 6 -4 Q10 -1 6 4 Q3 9 0 10 Q-3 9 -6 4 Q-10 -1 -6 -4 Q-4 -7 0 -10Z" transform="translate(22 118) rotate(-100)"/><path d="M0 -10 Q4 -7 6 -4 Q10 -1 6 4 Q3 9 0 10 Q-3 9 -6 4 Q-10 -1 -6 -4 Q-4 -7 0 -10Z" transform="translate(44 118) rotate(-120)"/><path d="M0 -10 Q4 -7 6 -4 Q10 -1 6 4 Q3 9 0 10 Q-3 9 -6 4 Q-10 -1 -6 -4 Q-4 -7 0 -10Z" transform="translate(11 134) rotate(-90)"/><path d="M0 -10 Q4 -7 6 -4 Q10 -1 6 4 Q3 9 0 10 Q-3 9 -6 4 Q-10 -1 -6 -4 Q-4 -7 0 -10Z" transform="translate(31 156) rotate(-120)"/><path d="M0 -10 Q4 -7 6 -4 Q10 -1 6 4 Q3 9 0 10 Q-3 9 -6 4 Q-10 -1 -6 -4 Q-4 -7 0 -10Z" transform="translate(160 40) rotate(45)"/><path d="M0 -10 Q4 -7 6 -4 Q10 -1 6 4 Q3 9 0 10 Q-3 9 -6 4 Q-10 -1 -6 -4 Q-4 -7 0 -10Z" transform="translate(108 44) rotate(20)"/><path d="M0 -10 Q4 -7 6 -4 Q10 -1 6 4 Q3 9 0 10 Q-3 9 -6 4 Q-10 -1 -6 -4 Q-4 -7 0 -10Z" transform="translate(68 56) rotate(-30)"/><path d="M0 -10 Q4 -7 6 -4 Q10 -1 6 4 Q3 9 0 10 Q-3 9 -6 4 Q-10 -1 -6 -4 Q-4 -7 0 -10Z" transform="translate(83 25) rotate(-10)"/><path d="M0 -10 Q4 -7 6 -4 Q10 -1 6 4 Q3 9 0 10 Q-3 9 -6 4 Q-10 -1 -6 -4 Q-4 -7 0 -10Z" transform="translate(58 14) rotate(-20)"/><path d="M0 -10 Q4 -7 6 -4 Q10 -1 6 4 Q3 9 0 10 Q-3 9 -6 4 Q-10 -1 -6 -4 Q-4 -7 0 -10Z" transform="translate(100 8) rotate(10)"/><path d="M0 -10 Q4 -7 6 -4 Q10 -1 6 4 Q3 9 0 10 Q-3 9 -6 4 Q-10 -1 -6 -4 Q-4 -7 0 -10Z" transform="translate(186 100) rotate(90)"/><path d="M0 -10 Q4 -7 6 -4 Q10 -1 6 4 Q3 9 0 10 Q-3 9 -6 4 Q-10 -1 -6 -4 Q-4 -7 0 -10Z" transform="translate(155 95) rotate(80)"/><path d="M0 -10 Q4 -7 6 -4 Q10 -1 6 4 Q3 9 0 10 Q-3 9 -6 4 Q-10 -1 -6 -4 Q-4 -7 0 -10Z" transform="translate(60 100) rotate(-80)"/><path d="M0 -10 Q4 -7 6 -4 Q10 -1 6 4 Q3 9 0 10 Q-3 9 -6 4 Q-10 -1 -6 -4 Q-4 -7 0 -10Z" transform="translate(75 8) rotate(-10)"/><path d="M0 -10 Q4 -7 6 -4 Q10 -1 6 4 Q3 9 0 10 Q-3 9 -6 4 Q-10 -1 -6 -4 Q-4 -7 0 -10Z" transform="translate(115 12) rotate(20)"/><path d="M0 -10 Q4 -7 6 -4 Q10 -1 6 4 Q3 9 0 10 Q-3 9 -6 4 Q-10 -1 -6 -4 Q-4 -7 0 -10Z" transform="translate(150 22) rotate(40)"/><path d="M0 -10 Q4 -7 6 -4 Q10 -1 6 4 Q3 9 0 10 Q-3 9 -6 4 Q-10 -1 -6 -4 Q-4 -7 0 -10Z" transform="translate(185 65) rotate(70)"/><path d="M0 -10 Q4 -7 6 -4 Q10 -1 6 4 Q3 9 0 10 Q-3 9 -6 4 Q-10 -1 -6 -4 Q-4 -7 0 -10Z" transform="translate(12 80) rotate(-70)"/><path d="M0 -10 Q4 -7 6 -4 Q10 -1 6 4 Q3 9 0 10 Q-3 9 -6 4 Q-10 -1 -6 -4 Q-4 -7 0 -10Z" transform="translate(70 75) rotate(-40)"/><path d="M0 -10 Q4 -7 6 -4 Q10 -1 6 4 Q3 9 0 10 Q-3 9 -6 4 Q-10 -1 -6 -4 Q-4 -7 0 -10Z" transform="translate(120 70) rotate(40)"/><path d="M0 -10 Q4 -7 6 -4 Q10 -1 6 4 Q3 9 0 10 Q-3 9 -6 4 Q-10 -1 -6 -4 Q-4 -7 0 -10Z" transform="translate(160 120) rotate(120)"/><path d="M0 -10 Q4 -7 6 -4 Q10 -1 6 4 Q3 9 0 10 Q-3 9 -6 4 Q-10 -1 -6 -4 Q-4 -7 0 -10Z" transform="translate(50 140) rotate(-110)"/></g>
</svg>
<div id="ttl2" class="t" style="left:528px;top:277.68px;font-size:22px;color:#151515;letter-spacing:0.45px">Primary Production</div>
<div class="a" style="left:525px;top:302.5px;width:216px;height:1.5px;background:#b4b4b4"></div>
<div id="dt" class="t" style="left:527px;top:308.69px;font-size:11px;color:#a3a3a3;">Tuesday, July 10, 2012</div>
<div id="tm" class="t" style="left:654.4px;top:308.69px;font-size:11px;color:#a3a3a3;">4:36 PM</div>
<div id="h1" class="t" style="left:889.6px;top:470.48px;font-size:15.5px;color:#5d8c9c;letter-spacing:0.39px">Primary production</div>
<div id="pp0" class="t" style="left:889px;top:493.07px;font-size:12.2px;color:#1c1c1c;-webkit-text-stroke:0.15px #1c1c1c;letter-spacing:0.326px">Primary production is the production of organic</div>
<div id="pp1" class="t" style="left:889px;top:509.37px;font-size:12.2px;color:#1c1c1c;-webkit-text-stroke:0.15px #1c1c1c;letter-spacing:0.204px">matter from inorganic carbon sources.</div>
<div id="pp2" class="t" style="left:889px;top:525.67px;font-size:12.2px;color:#1c1c1c;-webkit-text-stroke:0.15px #1c1c1c;letter-spacing:0.278px">Overwhelmingly, this occurs through</div>
<div id="pp3" class="t" style="left:889px;top:541.97px;font-size:12.2px;color:#1c1c1c;-webkit-text-stroke:0.15px #1c1c1c;letter-spacing:0.274px">photosynthesis. <span style="background:#fbf49a;box-shadow:0 0 0 1.5px #fbf49a">The energy incorporated through</span></div>
<div id="pp4" class="t" style="left:889px;top:558.27px;font-size:12.2px;color:#1c1c1c;-webkit-text-stroke:0.15px #1c1c1c;letter-spacing:0.299px"><span style="background:#fbf49a;box-shadow:0 0 0 1.5px #fbf49a">this process supports life on earth</span></div>
<div id="h2" class="t" style="left:524.4px;top:622.38px;font-size:15.5px;color:#5d8c9c;letter-spacing:-0.1px">Ecosystem processes</div>
<div id="ep0" class="t" style="left:524.4px;top:642.97px;font-size:12.2px;color:#1c1c1c;-webkit-text-stroke:0.15px #1c1c1c;letter-spacing:0.156px">Energy and carbon enter ecosystems through</div>
<div id="ep1" class="t" style="left:524.4px;top:659.22px;font-size:12.2px;color:#1c1c1c;-webkit-text-stroke:0.15px #1c1c1c;letter-spacing:0.252px">photosynthesis, are incorporated into living tissue,</div>
<div id="ep2" class="t" style="left:524.4px;top:675.47px;font-size:12.2px;color:#1c1c1c;-webkit-text-stroke:0.15px #1c1c1c;letter-spacing:0.307px">transferred to other organisms that feed on the living</div>
<div id="ep3" class="t" style="left:524.4px;top:691.72px;font-size:12.2px;color:#1c1c1c;-webkit-text-stroke:0.15px #1c1c1c;letter-spacing:0.235px">and dead plant matter, and eventually released</div>
<div id="ep4" class="t" style="left:524.4px;top:707.97px;font-size:12.2px;color:#1c1c1c;-webkit-text-stroke:0.15px #1c1c1c;letter-spacing:0.315px">through respiration.</div>
<div id="h3" class="t" style="left:524.4px;top:746.68px;font-size:15.5px;color:#5d8c9c;letter-spacing:0.18px">Energy flow</div>
<div id="ef0" class="t" style="left:524.4px;top:767.17px;font-size:12.2px;color:#1c1c1c;-webkit-text-stroke:0.15px #1c1c1c;letter-spacing:0.211px">The carbon and energy incorporated into plant tissues</div>
<div id="ef1" class="t" style="left:524.4px;top:783.42px;font-size:12.2px;color:#1c1c1c;-webkit-text-stroke:0.15px #1c1c1c;letter-spacing:0.318px">(net primary production) is either consumed by</div>
<div id="ef2" class="t" style="left:524.4px;top:799.67px;font-size:12.2px;color:#1c1c1c;-webkit-text-stroke:0.15px #1c1c1c;letter-spacing:0.252px">animals while the plant is alive, or it remains uneaten</div>
<div id="ef3" class="t" style="left:524.4px;top:815.92px;font-size:12.2px;color:#1c1c1c;-webkit-text-stroke:0.15px #1c1c1c;letter-spacing:0.244px">when the plant tissue dies and becomes detritus.</div>
<div id="q0" class="t" style="left:888.8px;top:354.93px;font-size:12.6px;color:#727272;font-style:italic">“An ecosystem consists of a biological community</div>
<div id="q1" class="t" style="left:888.8px;top:371.13px;font-size:12.6px;color:#727272;font-style:italic;letter-spacing:0.19px">together with its abiotic environment, interacting</div>
<div id="q2" class="t" style="left:888.8px;top:387.53px;font-size:12.6px;color:#727272;font-style:italic">as a system”</div>
<div id="au" class="t" style="left:1031.7px;top:420.58px;font-size:10.3px;color:#626262;">Arthur <span style="text-decoration:underline dotted #888">Tansley</span>, a British ecologist</div>
<svg class="a" style="left:862.5px;top:352.5px" width="16" height="16"><path d="M1.2 7.8L7.8 1.5L14.6 7.8M3 6.3V14.3H12.8V6.3M6.5 14.3V10.2H9.3V14.3M11.5 2.3V4.8" stroke="#7a7a7a" stroke-width="1.2" fill="none"/></svg>
<svg class="a" style="left:863px;top:471.5px" width="14" height="14"><path d="M7 0.8L8.7 5L13.3 5.2L9.7 8.1L11 12.7L7 10.1L3 12.7L4.3 8.1L0.7 5.2L5.3 5Z" fill="#f1bb45"/></svg>
<svg class="a" style="left:499.5px;top:621.5px" width="11" height="15"><path d="M5.5 0.8C8.4 0.8 10.2 2.9 10.2 5.3C10.2 7.5 8.4 8.6 8 10.6H3C2.6 8.6 0.8 7.5 0.8 5.3C0.8 2.9 2.6 0.8 5.5 0.8Z" fill="#f3cf3a"/><path d="M3.2 11.2H7.8V13.2Q5.5 14.6 3.2 13.2Z" fill="#5a5040"/></svg>
<div id="qm" class="t" style="left:500.5px;top:746.80px;font-size:15px;color:#5d84a0;">?</div>
<!-- birds image -->
<div class="a" style="left:525px;top:353px;width:306px;height:229px;box-shadow:0 2px 9px 2px rgba(0,0,0,0.32);overflow:hidden;background:#4f7f3a">
<svg width="306" height="229" viewBox="0 0 306 229">
<defs>
<filter id="bl8" x="-50%" y="-50%" width="200%" height="200%"><feGaussianBlur stdDeviation="8"/></filter>
<filter id="bl3" x="-30%" y="-30%" width="160%" height="160%"><feGaussianBlur stdDeviation="3"/></filter>
<filter id="fz" x="-20%" y="-20%" width="140%" height="140%"><feTurbulence type="fractalNoise" baseFrequency="0.35" numOctaves="2" seed="3"/><feDisplacementMap in="SourceGraphic" scale="5"/><feGaussianBlur stdDeviation="0.7"/></filter>
<filter id="bl1" x="-20%" y="-20%" width="140%" height="140%"><feGaussianBlur stdDeviation="0.8"/></filter><filter id="btx" x="0" y="0" width="100%" height="100%"><feTurbulence type="fractalNoise" baseFrequency="0.3" numOctaves="2" seed="9" result="n"/><feColorMatrix in="n" type="matrix" values="0 0 0 0 0  0 0 0 0 0  0 0 0 0 0  -2 0 0 0 1.2"/></filter>
<linearGradient id="apl" x1="0" y1="0" x2="0.6" y2="1"><stop offset="0" stop-color="#22b0ff"/><stop offset="0.5" stop-color="#5a50e8"/><stop offset="1" stop-color="#b030d0"/></linearGradient>
<linearGradient id="mac" x1="0" y1="0" x2="1" y2="0"><stop offset="0" stop-color="#ee4a68"/><stop offset="1" stop-color="#f59a2a"/></linearGradient>
<linearGradient id="tail" x1="0" y1="1" x2="1" y2="0"><stop offset="0" stop-color="#d8b828"/><stop offset="0.6" stop-color="#e0c838"/><stop offset="1" stop-color="#a8cc38"/></linearGradient>
</defs>
<rect width="306" height="229" fill="#4c7a3c"/>
<g filter="url(#bl8)">
<rect x="-10" y="-10" width="110" height="140" fill="#3b4a30"/>
<ellipse cx="260" cy="60" rx="70" ry="70" fill="#78a862"/>
<ellipse cx="200" cy="20" rx="50" ry="25" fill="#4a7c40"/>
<ellipse cx="70" cy="8" rx="30" ry="14" fill="#5a9050"/>
<ellipse cx="12" cy="80" rx="16" ry="20" fill="#c04a24"/>
<ellipse cx="20" cy="98" rx="12" ry="10" fill="#3050a0"/>
<ellipse cx="290" cy="170" rx="30" ry="60" fill="#62984e"/>
<ellipse cx="10" cy="200" rx="30" ry="40" fill="#4a8a3a"/>
<ellipse cx="150" cy="210" rx="40" ry="25" fill="#3a6e36"/>
<ellipse cx="175" cy="120" rx="25" ry="35" fill="#2a4424"/>
</g>
<g filter="url(#bl3)">
<ellipse cx="22" cy="138" rx="28" ry="28" fill="#2e5a38"/>
<ellipse cx="275" cy="200" rx="25" ry="30" fill="#4a8e46"/>
</g>
<g filter="url(#fz)">
<path d="M6 222 Q30 180 62 135 L88 126 Q80 150 58 185 Q35 215 22 226 Z" fill="url(#tail)"/>
<path d="M70 125 Q90 150 130 140 L150 160 Q100 175 62 150 Z" fill="#5aa040"/>
<ellipse cx="98" cy="195" rx="32" ry="36" fill="#5e9e5c"/>
<path d="M52 112 Q70 45 120 24 L128 34 Q92 62 76 118 Z" fill="#8cc040"/>
<path d="M86 60 Q100 33 135 34 Q172 38 170 85 Q165 112 125 112 Q92 110 82 90 Z" fill="#f4a21c"/>
<path d="M72 100 Q110 125 160 108 L172 132 Q120 150 80 128 Z" fill="#20301a"/>
<path d="M128 128 L150 126 L152 146 L134 146 Z" fill="#eecf30"/>
<path d="M150 64 Q158 22 185 22 Q212 26 232 62" stroke="#2c64d4" stroke-width="22" fill="none"/><path d="M138 52 Q160 46 178 58 L176 78 Q155 82 140 76 Z" fill="#2c64d4"/>
<path d="M150 24 Q170 12 182 28 Q184 42 168 46 Q152 46 150 24 Z" fill="#e63a20"/>
<path d="M138 20 Q150 12 156 28 L152 42 Q140 40 138 20 Z" fill="#b4c43a"/>
<path d="M175 118 Q185 110 198 118 L196 150 Q180 148 175 118 Z" fill="#a4c83c"/>
<path d="M190 135 Q195 112 222 110 Q262 104 288 118 Q296 150 282 172 Q258 190 225 182 Q195 170 190 135 Z" fill="#f28a1e"/>
<path d="M206 56 Q240 40 272 66 Q288 88 284 118 Q262 132 232 128 Q210 122 206 100 Z" fill="#2a68d8"/>
<path d="M272 66 Q290 85 288 122 L278 122 Q280 90 268 70 Z" fill="#ea7420"/>
<ellipse cx="218" cy="104" rx="10" ry="11" fill="#e23a1c"/>
<path d="M188 170 Q230 196 272 176 L268 192 Q228 206 186 186 Z" fill="#1a2a16"/>
<ellipse cx="244" cy="200" rx="16" ry="10" fill="#eac232"/>
</g>
<g filter="url(#bl1)">
<ellipse cx="233" cy="67" rx="4" ry="2.6" fill="#2a1020"/><ellipse cx="248" cy="96" rx="4" ry="2.6" fill="#2a1020"/>
<path d="M0 103 Q30 106 55 112 Q100 124 150 150 Q195 175 235 212 L246 229" stroke="#5e5040" stroke-width="6" fill="none"/>
<path d="M272 178 Q285 205 296 229" stroke="#6e6650" stroke-width="4" fill="none"/>
<path d="M79 128 Q77 180 78 229" stroke="#a4bc88" stroke-width="2.5" fill="none"/>
<path d="M189 185 Q192 210 190 229" stroke="#8a8068" stroke-width="2.5" fill="none"/>
<path d="M62 106 Q72 100 80 112" stroke="#707a84" stroke-width="4" fill="none"/><path d="M145 145 Q155 140 160 156" stroke="#707a84" stroke-width="4" fill="none"/><path d="M170 165 Q182 158 190 172" stroke="#707a84" stroke-width="4" fill="none"/>
</g>
<rect width="306" height="229" filter="url(#btx)" opacity="0.17"/>
<path d="M95.5 61.5 C91 58.5 84.5 60 83 66.5 C81.5 73 85 81 89.5 84.5 C91.5 86 93.5 86 95.5 85 C97.5 86 99.5 86 101.5 84.5 C105 81.5 107.5 76 108 72.5 C103.5 70.5 102 64 105.5 60.5 C103 58 99.5 58.5 95.5 61.5 Z M96 58 C96 54.5 98.5 52 101.5 51.5 C101.5 55 99 57.5 96 58 Z" fill="url(#apl)"/>
<g stroke="#e8486e" stroke-width="1.9" fill="none" stroke-linecap="round" opacity="0.92"><path d="M124.5 59.8 L139 58.4 M126.5 61.8 L128 64.2 M131.2 61.4 L131.6 64.2 M136.6 61.4 L135 64.2 M123.2 68.5 V66.2 H139 V68.5 M124.5 70.8 H139 M131.5 67 Q130 74.5 123.5 78 M127.5 73 H136.5 Q134 76.5 139 78 M135.5 73.5 Q132 77.5 127 78"/><path d="M152 58.2 V76.6 M152 66.8 H159 M144.8 76.6 H160.5"/></g>
<text x="160.5" y="77" font-family="Liberation Sans" font-size="26" fill="url(#mac)" stroke="url(#mac)" stroke-width="0.8" opacity="0.92">MAC</text>
<text x="122" y="86.8" font-family="Liberation Sans" font-size="12.5" fill="#2a92b0" stroke="#2a92b0" stroke-width="0.45" opacity="0.92" textLength="97" lengthAdjust="spacing">www.23mac.com</text>
</svg></div>
<!-- tree image -->
<div class="a" style="left:887px;top:609px;width:301px;height:226px;box-shadow:0 2px 9px 2px rgba(0,0,0,0.32);overflow:hidden">
<svg width="301" height="226" viewBox="0 0 301 226">
<defs>
<linearGradient id="sky" x1="0" y1="0" x2="0" y2="1"><stop offset="0" stop-color="#2864d2"/><stop offset="0.45" stop-color="#4884da"/><stop offset="1" stop-color="#9cbce6"/></linearGradient>
<linearGradient id="grs" x1="0" y1="0" x2="0" y2="1"><stop offset="0" stop-color="#bcc84c"/><stop offset="0.5" stop-color="#d4ca3c"/><stop offset="1" stop-color="#e6c430"/></linearGradient>
<radialGradient id="can" cx="0.42" cy="0.3" r="0.75"><stop offset="0" stop-color="#e4a038"/><stop offset="0.55" stop-color="#d88226"/><stop offset="1" stop-color="#a8703a"/></radialGradient>
<filter id="cz" x="-10%" y="-10%" width="120%" height="120%"><feTurbulence type="fractalNoise" baseFrequency="0.09" numOctaves="3" seed="7"/><feDisplacementMap in="SourceGraphic" scale="14"/></filter>
<filter id="tx" x="-10%" y="-10%" width="120%" height="120%"><feTurbulence type="fractalNoise" baseFrequency="0.25" numOctaves="2" seed="2"/><feDisplacementMap in="SourceGraphic" scale="8"/><feGaussianBlur stdDeviation="1.2"/></filter>
<filter id="gz"><feGaussianBlur stdDeviation="1.5"/></filter><filter id="mot" x="0" y="0" width="100%" height="100%"><feTurbulence type="fractalNoise" baseFrequency="0.18" numOctaves="2" seed="11" result="n"/><feColorMatrix in="n" type="matrix" values="0 0 0 0 0.42  0 0 0 0 0.28  0 0 0 0 0.1  -2.6 0 0 0 1.45" result="d"/><feComposite in="d" in2="SourceAlpha" operator="in"/></filter><filter id="mot2" x="0" y="0" width="100%" height="100%"><feTurbulence type="fractalNoise" baseFrequency="0.22" numOctaves="2" seed="5" result="n"/><feColorMatrix in="n" type="matrix" values="0 0 0 0 0.92  0 0 0 0 0.7  0 0 0 0 0.28  2.0 0 0 0 -1.05" result="d"/><feComposite in="d" in2="SourceAlpha" operator="in"/></filter>
</defs>
<rect width="301" height="226" fill="url(#sky)"/>
<rect y="170" width="301" height="56" fill="url(#grs)"/>
<g filter="url(#gz)"><ellipse cx="40" cy="196" rx="40" ry="5" fill="#98b04a" opacity="0.6"/><ellipse cx="200" cy="190" rx="60" ry="5" fill="#a8b848" opacity="0.5"/><rect y="214" width="301" height="12" fill="#e8c82e" opacity="0.5"/></g>
<path d="M145 172 L150 150 L162 150 L168 172 Z" fill="#2a2014"/>
<g filter="url(#cz)">
<path d="M30 112 Q28 70 60 54 Q76 28 110 20 Q150 14 190 34 Q232 46 258 92 Q278 118 272 146 Q266 160 246 158 Q212 160 178 162 Q152 166 140 160 Q100 166 72 158 Q40 160 32 142 Q26 128 30 112 Z" fill="url(#can)"/>
</g>
<g filter="url(#cz)"><g filter="url(#mot)"><path d="M30 112 Q28 70 60 54 Q76 28 110 20 Q150 14 190 34 Q232 46 258 92 Q278 118 272 146 Q266 160 246 158 Q212 160 178 162 Q152 166 140 160 Q100 166 72 158 Q40 160 32 142 Q26 128 30 112 Z" fill="#000"/></g><g filter="url(#mot2)"><path d="M30 112 Q28 70 60 54 Q76 28 110 20 Q150 14 190 34 Q232 46 258 92 Q278 118 272 146 Q266 160 246 158 Q212 160 178 162 Q152 166 140 160 Q100 166 72 158 Q40 160 32 142 Q26 128 30 112 Z" fill="#000"/></g></g>
<g filter="url(#tx)">
<ellipse cx="228" cy="122" rx="34" ry="28" fill="#9a7238" opacity="0.6"/>
<ellipse cx="135" cy="125" rx="28" ry="24" fill="#8a7236" opacity="0.5"/>
<ellipse cx="95" cy="62" rx="28" ry="18" fill="#eaa838" opacity="0.7"/>
<ellipse cx="185" cy="72" rx="26" ry="20" fill="#e2b448" opacity="0.55"/>
<ellipse cx="55" cy="132" rx="22" ry="18" fill="#eaa232" opacity="0.6"/>
<ellipse cx="160" cy="40" rx="20" ry="12" fill="#d69030" opacity="0.5"/>
<ellipse cx="250" cy="140" rx="20" ry="14" fill="#7a6a40" opacity="0.5"/>

</g>
</svg></div>

<div class="blk" style="top:846px;height:2px"></div>
</body></html>
